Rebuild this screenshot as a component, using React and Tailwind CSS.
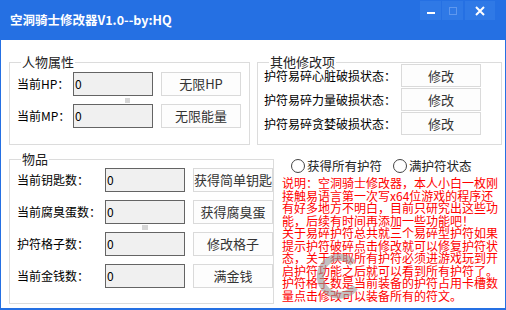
import React from "react";

const Input = () => (
  <div className="w-[80px] h-[24px] bg-[#f0f0f0] border border-[#646464] flex items-center pl-[1px] text-[12px] leading-[14px] text-black shrink-0">
    0
  </div>
);

const Btn = ({ children, h = "h-[24px]", cls = "" }) => (
  <div
    className={`w-[80px] ${h} bg-[#fdfdfd] border border-[#dadada] flex items-center justify-center text-[13px] leading-[16px] text-[#333] shrink-0 whitespace-nowrap overflow-hidden ${cls}`}
  >
    {children}
  </div>
);

const Legend = ({ children }) => (
  <span className="absolute left-[11px] -top-[9px] px-[1px] bg-white text-[13px] leading-[16px] text-[#222]">
    {children}
  </span>
);

const Radio = ({ label, w }) => (
  <div className={`flex items-center gap-[2px] ${w}`}>
    <div className="w-[14px] h-[14px] rounded-full border-[1.5px] border-[#444] bg-white shrink-0" />
    <span className="text-[12.5px] leading-[14px] text-[#222] whitespace-nowrap">{label}</span>
  </div>
);

const lines = [
  "说明：空洞骑士修改器，本人小白一枚刚",
  "接触易语言第一次写x64位游戏的程序还",
  "有好多地方不明白，目前只研究出这些功",
  "能，后续有时间再添加一些功能吧！",
  "关于易碎护符总共就三个易碎型护符如果",
  "提示护符破碎点击修改就可以修复护符状",
  "态，关于获取所有护符必须进游戏玩到开",
  "启护符功能之后就可以看到所有护符了。",
  "护符格子数是当前装备的护符占用卡槽数",
  "量点击修改可以装备所有的符文。",
];

export default function App() {
  return (
    <div className="w-[506px] h-[310px] bg-[#2570e3] flex flex-col font-['Noto_Sans_CJK_SC',sans-serif] overflow-hidden">
      {/* Title bar */}
      <div className="h-[40px] flex shrink-0">
        <div className="pl-[10px] pt-[12px] text-white font-bold text-[12.5px] leading-[16px] whitespace-nowrap">
          空洞骑士修改器V1.0--by:HQ
        </div>
        <div className="ml-auto flex items-start pt-[1px] pr-[11px]">
          <div className="w-[21px] h-[19px] bg-[#2f79e6] flex items-center justify-center">
            <div className="w-[8px] h-[2px] bg-white mt-[4px]" />
          </div>
          <div className="w-[21px] h-[19px] ml-[1px] bg-[#2f79e6] flex items-center justify-center">
            <div className="w-[8px] h-[8px] border border-[#5f98ee]" />
          </div>
          <div className="w-[30px] h-[19px] ml-[2px] bg-[#2f79e6] flex items-center justify-center">
            <svg width="10" height="10" viewBox="0 0 10 10">
              <path d="M1 1 L9 9 M9 1 L1 9" stroke="white" strokeWidth="2" />
            </svg>
          </div>
        </div>
      </div>

      {/* Body */}
      <div className="flex-1 mx-[1px] mb-[2px] bg-white relative">
        {/* top row */}
        <div className="flex gap-[7px] pl-[8px] mt-[22px]">
          {/* 人物属性 */}
          <div className="w-[241px] h-[83px] border border-[#dcdcdc] relative">
            <Legend>人物属性</Legend>
            <div className="flex flex-col gap-[8px] pt-[9px] pl-[7px]">
              <div className="flex items-center h-[24px]">
                <span className="w-[56px] text-[12px] leading-[14px] text-black whitespace-nowrap">当前HP：</span>
                <Input />
                <Btn cls="ml-[8px]">无限HP</Btn>
              </div>
              <div className="flex items-center h-[24px]">
                <span className="w-[56px] text-[12px] leading-[14px] text-black whitespace-nowrap">当前MP：</span>
                <Input />
                <Btn cls="ml-[8px]">无限能量</Btn>
              </div>
            </div>
          </div>

          {/* 其他修改项 */}
          <div className="w-[245px] h-[83px] border border-[#dcdcdc] relative">
            <Legend>其他修改项</Legend>
            <div className="flex flex-col gap-[1px] pt-[1px] pl-[6px]">
              {["护符易碎心脏破损状态：", "护符易碎力量破损状态：", "护符易碎贪婪破损状态："].map((t) => (
                <div key={t} className="flex items-center h-[23px]">
                  <span className="w-[137px] text-[12px] leading-[14px] text-black whitespace-nowrap">{t}</span>
                  <Btn h="h-[23px]">修改</Btn>
                </div>
              ))}
            </div>
          </div>
        </div>

        {/* bottom row */}
        <div className="flex pl-[8px] mt-[14px]">
          {/* 物品 */}
          <div className="w-[265px] h-[145px] border border-[#dcdcdc] relative">
            <Legend>物品</Legend>
            <div className="flex flex-col gap-[8px] pt-[8px] pl-[7px]">
              {[
                ["当前钥匙数：", "获得简单钥匙"],
                ["当前腐臭蛋数：", "获得腐臭蛋"],
                ["护符格子数：", "修改格子"],
                ["当前金钱数：", "满金钱"],
              ].map(([l, b]) => (
                <div key={l} className="flex items-center h-[24px]">
                  <span className="w-[88px] text-[12px] leading-[14px] text-black whitespace-nowrap">{l}</span>
                  <Input />
                  <Btn cls="ml-[8px]">{b}</Btn>
                </div>
              ))}
            </div>
          </div>

          {/* right column */}
          <div className="ml-[8px] flex flex-col">
            <div className="flex items-center h-[14px] pl-[9px]">
              <Radio label="获得所有护符" w="w-[102px]" />
              <Radio label="满护符状态" w="" />
            </div>
            <div className="mt-[4px] text-[12px] leading-[12.5px] text-[#ff0000]">
              {lines.map((l) => (
                <div key={l} className="whitespace-nowrap">{l}</div>
              ))}
            </div>
          </div>
        </div>

        {/* small artifacts */}
        <div className="absolute left-[124px] top-[58px] w-[5px] h-[5px] bg-[#d6d6d6]" />
        <div className="absolute left-[141px] top-[185px] w-[6px] h-[5px] bg-[#d6d6d6]" />

        {/* watermark */}
        <svg className="absolute left-[314px] top-[211px] opacity-60 pointer-events-none" width="50" height="50" viewBox="0 0 50 50">
          <path d="M38 12 A19 19 0 1 0 40 36" fill="none" stroke="#9a9a9a" strokeWidth="7" />
        </svg>
      </div>
    </div>
  );
}
